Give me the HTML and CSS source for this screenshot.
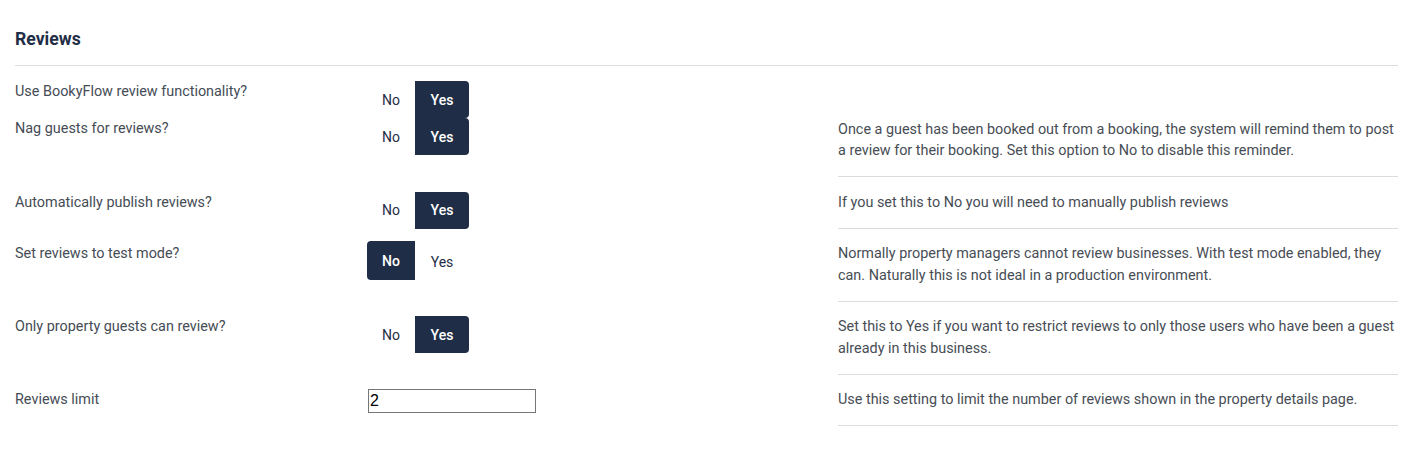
FILE: index.html
```html
<!DOCTYPE html>
<html>
<head>
<meta charset="utf-8">
<link rel="stylesheet" href="styles.css">
</head>
<body>
<div class="page">
  <h2 class="title">Reviews</h2>
  <div class="divider"></div>

  <div class="row first">
    <div class="label">Use BookyFlow review functionality?</div>
    <div class="control">
      <div class="toggle"><span class="opt">No</span><span class="opt on last">Yes</span></div>
    </div>
    <div class="desc-empty"></div>
  </div>

  <div class="row tight">
    <div class="label">Nag guests for reviews?</div>
    <div class="control">
      <div class="toggle"><span class="opt">No</span><span class="opt on last">Yes</span></div>
    </div>
    <div class="desc shift">Once a guest has been booked out from a booking, the system will remind them to post a review for their booking. Set this option to No to disable this reminder.</div>
  </div>

  <div class="row r3">
    <div class="label">Automatically publish reviews?</div>
    <div class="control">
      <div class="toggle"><span class="opt">No</span><span class="opt on last">Yes</span></div>
    </div>
    <div class="desc">If you set this to No you will need to manually publish reviews</div>
  </div>

  <div class="row">
    <div class="label">Set reviews to test mode?</div>
    <div class="control">
      <div class="toggle"><span class="opt on first-opt">No</span><span class="opt">Yes</span></div>
    </div>
    <div class="desc">Normally property managers cannot review businesses. With test mode enabled, they can. Naturally this is not ideal in a production environment.</div>
  </div>

  <div class="row">
    <div class="label">Only property guests can review?</div>
    <div class="control">
      <div class="toggle"><span class="opt">No</span><span class="opt on last">Yes</span></div>
    </div>
    <div class="desc">Set this to Yes if you want to restrict reviews to only those users who have been a guest already in this business.</div>
  </div>

  <div class="row">
    <div class="label">Reviews limit</div>
    <div class="control">
      <input class="num" type="text" value="2">
    </div>
    <div class="desc last-desc">Use this setting to limit the number of reviews shown in the property details page.</div>
  </div>
</div>
</body>
</html>
```

FILE: styles.css
```css
html, body {
  margin: 0;
  padding: 0;
  background: #ffffff;
}

body {
  font-family: Roboto, "Liberation Sans", Arial, sans-serif;
  font-size: 14.4px;
  color: #474d55;
}

.page {
  width: 1383px;
  padding: 0 15px;
}

.title {
  margin: 0;
  padding-top: 29px;
  font-size: 17.6px;
  line-height: 21px;
  font-weight: 700;
  color: #1f2e46;
}

.divider {
  margin-top: 15px;
  border-top: 1px solid #dcdcdc;
}

.row {
  display: grid;
  grid-template-columns: 352px 471px 560px;
  align-items: start;
  margin-top: 14px;
}

.row.first {
  margin-top: 15px;
}

.row.tight {
  margin-top: 0;
}

.row.r3 {
  margin-top: 15px;
}

.label {
  line-height: 21.45px;
  color: #454c55;
}

.toggle {
  display: flex;
  align-items: stretch;
}

.opt {
  display: flex;
  align-items: center;
  justify-content: center;
  height: 37px;
  font-size: 14px;
  font-weight: 400;
  color: #1f2e46;
}

.opt:first-child {
  width: 48px;
}

.opt:last-child {
  width: 54px;
}

.opt.on {
  background: #1f2e46;
  color: #ffffff;
  font-weight: 500;
}

.opt.on.last {
  border-radius: 0 4px 4px 0;
}

.opt.on.first-opt {
  border-radius: 4px 0 0 4px;
  height: 39px;
  margin-top: -2px;
}

.desc {
  line-height: 21.45px;
  padding-bottom: 15px;
  border-bottom: 1px solid #dcdcdc;
  color: #474d55;
}

.desc.shift {
  padding-top: 1px;
  padding-bottom: 14px;
}

.desc.last-desc {
  padding-bottom: 14px;
}

.num {
  display: block;
  box-sizing: border-box;
  width: 168px;
  height: 24px;
  margin: 0 0 0 1px;
  padding: 0 1px;
  border: 1px solid #767676;
  font-family: "Liberation Sans", Arial, sans-serif;
  font-size: 16px;
  color: #000000;
  background: #ffffff;
}
```
